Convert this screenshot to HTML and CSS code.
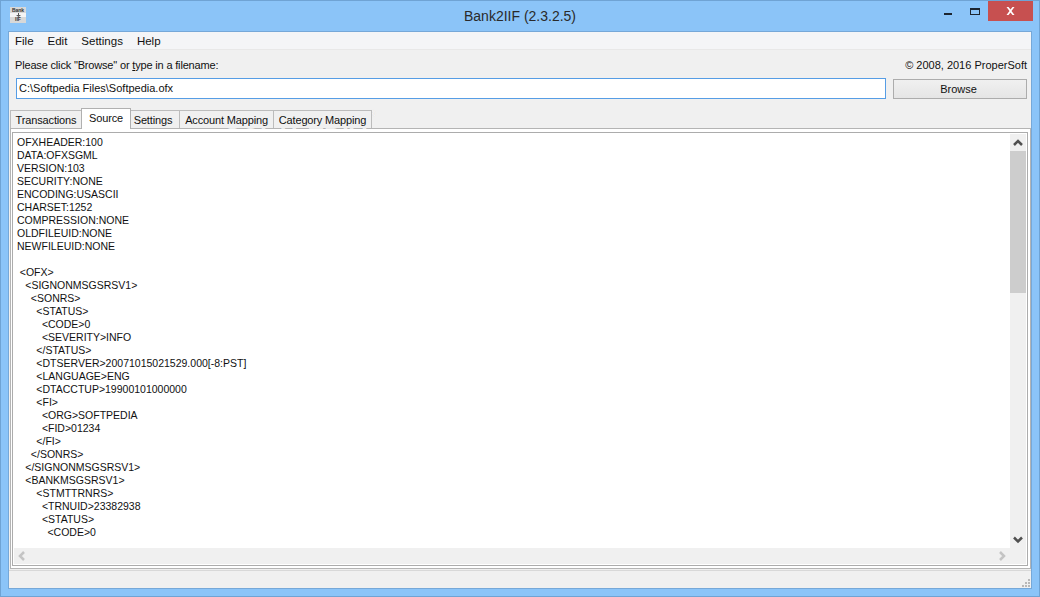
FILE: index.html
```html
<!DOCTYPE html>
<html lang="en">
<head>
<meta charset="utf-8">
<title>Bank2IIF</title>
<link rel="stylesheet" href="styles.css">
</head>
<body>
<div class="window">
  <header class="titlebar">
    <div class="appicon"><span>Bank</span><svg width="5" height="4" viewBox="0 0 5 4"><path d="M2 0h1v2h2L2.500 4 0 2h2z" fill="#555"/></svg><span class="appicon-b">IIF</span></div>
    <div class="title">Bank2IIF (2.3.2.5)</div>
    <div class="controls">
      <svg class="ctl" width="30" height="20" viewBox="0 0 30 20"><rect x="16" y="12" width="8" height="2" fill="#1c2530"/></svg>
      <svg class="ctl" width="30" height="20" viewBox="0 0 30 20"><rect x="12.500" y="7.500" width="9" height="6" fill="none" stroke="#1c2530"/><rect x="12" y="7" width="10" height="2" fill="#1c2530"/></svg>
      <div class="close"><svg width="9" height="8" viewBox="0 0 9 8"><path d="M0.500 0h2l2 2.500 2-2.500h2L5.500 4l3 4h-2l-2-2.500-2 2.500h-2l3-4z" fill="#fff"/></svg></div>
    </div>
  </header>
  <div class="client">
    <nav class="menubar"><span>File</span><span>Edit</span><span>Settings</span><span>Help</span></nav>
    <div class="panel">
      <div class="labels"><span class="prompt">Please click "Browse" or <u>t</u>ype in a filename:</span><span>© 2008, 2016 ProperSoft</span></div>
      <div class="filerow">
        <div class="input">C:\Softpedia Files\Softpedia.ofx</div>
        <div class="button">Browse</div>
      </div>
      <div class="tabs">
        <div class="tab tab-transactions">Transactions</div>
        <div class="tab tab-source active">Source</div>
        <div class="tab tab-settings">Settings</div>
        <div class="tab tab-account">Account Mapping</div>
        <div class="tab tab-category">Category Mapping</div>
      </div>
      <div class="pane">
        <div class="pane-inner">
          <div class="editor">
            <pre class="source">OFXHEADER:100
DATA:OFXSGML
VERSION:103
SECURITY:NONE
ENCODING:USASCII
CHARSET:1252
COMPRESSION:NONE
OLDFILEUID:NONE
NEWFILEUID:NONE

 &lt;OFX&gt;
   &lt;SIGNONMSGSRSV1&gt;
     &lt;SONRS&gt;
       &lt;STATUS&gt;
         &lt;CODE&gt;0
         &lt;SEVERITY&gt;INFO
       &lt;/STATUS&gt;
       &lt;DTSERVER&gt;20071015021529.000[-8:PST]
       &lt;LANGUAGE&gt;ENG
       &lt;DTACCTUP&gt;19900101000000
       &lt;FI&gt;
         &lt;ORG&gt;SOFTPEDIA
         &lt;FID&gt;01234
       &lt;/FI&gt;
     &lt;/SONRS&gt;
   &lt;/SIGNONMSGSRSV1&gt;
   &lt;BANKMSGSRSV1&gt;
       &lt;STMTTRNRS&gt;
         &lt;TRNUID&gt;23382938
         &lt;STATUS&gt;
           &lt;CODE&gt;0</pre>
            <div class="vscroll">
              <svg class="arrow" width="16" height="17" viewBox="0 0 16 17"><path d="M4 11l4-4 4 4" fill="none" stroke="#505050" stroke-width="2.500"/></svg>
              <div class="vtrack"><div class="vthumb"></div></div>
              <svg class="arrow" width="16" height="17" viewBox="0 0 16 17"><path d="M4 6.500l4 4 4-4" fill="none" stroke="#505050" stroke-width="2.500"/></svg>
            </div>
          </div>
          <div class="hscroll">
            <svg width="16" height="16" viewBox="0 0 16 16"><path d="M10 4l-4 4 4 4" fill="none" stroke="#c4c4c4" stroke-width="2.500"/></svg>
            <svg width="16" height="16" viewBox="0 0 16 16"><path d="M6 4l4 4-4 4" fill="none" stroke="#c4c4c4" stroke-width="2.500"/></svg>
          </div>
        </div>
      </div>
    </div>
    <footer class="statusbar">
      <svg class="grip" width="8" height="8" viewBox="0 0 8 8"><g fill="#b8b8b8"><rect x="6" y="0" width="2" height="2"/><rect x="3" y="3" width="2" height="2"/><rect x="6" y="3" width="2" height="2"/><rect x="0" y="6" width="2" height="2"/><rect x="3" y="6" width="2" height="2"/><rect x="6" y="6" width="2" height="2"/></g></svg>
    </footer>
  </div>
</div>
<div class="watermark">SOFTPEDIA<sup class="reg">®</sup></div>
</body>
</html>
```
FILE: styles.css
```css
* { box-sizing: border-box; }
html, body { margin: 0; padding: 0; }
body {
  width: 1040px;
  height: 597px;
  overflow: hidden;
  position: relative;
  font-family: "Liberation Sans", Arial, sans-serif;
  font-size: 11px;
  color: #111;
}
.window {
  width: 1040px;
  height: 597px;
  background: #8bc4f8;
  border: 1px solid #6fa3d4;
  display: flex;
  flex-direction: column;
  padding: 0 7px 7px;
}
.titlebar {
  height: 30px;
  display: flex;
  align-items: flex-start;
  position: relative;
  flex: none;
}
.appicon {
  width: 16px;
  height: 16px;
  margin-top: 6px;
  margin-left: 2px;
  background: linear-gradient(#d8d8d8 0 6px, #f4f4f4 6px 10px, #d8d8d8 10px);
  display: flex;
  flex-direction: column;
  align-items: center;
  font-size: 5px;
  line-height: 6px;
  font-weight: 700;
  color: #333;
  flex: none;
}
.appicon-b { line-height: 5px; }
.title {
  position: absolute;
  left: 0;
  right: 0;
  top: 7px;
  text-align: center;
  font-size: 14px;
  line-height: 17px;
  color: #2a2a2a;
}
.controls {
  margin-left: auto;
  display: flex;
  margin-right: -1px;
  position: relative;
}
.ctl { display: block; }
.close {
  width: 45px;
  height: 20px;
  background: #c75050;
  display: flex;
  align-items: center;
  justify-content: center;
}
.client {
  flex: 1;
  display: flex;
  flex-direction: column;
  border: 1px solid #76a8d8;
  background: #f0f0f0;
  min-height: 0;
}
.menubar {
  height: 18px;
  flex: none;
  background: #f4f5f7;
  border-bottom: 1px solid #e8e8e8;
  display: flex;
  gap: 14px;
  padding-left: 6px;
  font-size: 11.500px;
  line-height: 18px;
}
.panel {
  flex: 1;
  min-height: 0;
  display: flex;
  flex-direction: column;
  padding: 0 0 1px 1px;
}
.labels {
  display: flex;
  justify-content: space-between;
  padding: 9px 4px 0 5px;
  height: 28px;
  line-height: 13px;
  flex: none;
}
.prompt { letter-spacing: -0.170px; }
.filerow {
  display: flex;
  gap: 7px;
  padding: 0 4px 0 6px;
  height: 21px;
  flex: none;
}
.input {
  flex: 1;
  border: 1px solid #569de5;
  background: #fff;
  line-height: 19px;
  padding-left: 2px;
}
.button {
  width: 134px;
  height: 20px;
  margin-top: 1px;
  border: 1px solid #acacac;
  background: linear-gradient(#f0f0f0, #e5e5e5);
  text-align: center;
  line-height: 18px;
  padding-right: 3px;
}
.tabs {
  display: flex;
  align-items: flex-end;
  height: 30px;
  flex: none;
  margin-bottom: -1px;
  position: relative;
  z-index: 1;
}
.tab {
  height: 18px;
  margin-bottom: 1px;
  background: #f0f0f0;
  border: 1px solid #bcbcbc;
  border-bottom: 0;
  line-height: 19px;
  text-align: center;
  letter-spacing: -0.150px;
  margin-left: -1px;
}
.tab:first-child { margin-left: 0; }
.tab-transactions { width: 72px; }
.tab-source { width: 50px; }
.tab-settings { width: 50px; padding-right: 4px; }
.tab-account { width: 95px; }
.tab-category { width: 99px; }
.tab.active {
  height: 21px;
  margin-bottom: 0;
  background: #fff;
  border-color: #b0b0b0;
  position: relative;
  z-index: 1;
}
.pane {
  flex: 1;
  min-height: 0;
  border: 1px solid #b4b4b4;
  background: #fff;
  padding: 3px 2px 2px 1px;
}
.pane-inner {
  height: 100%;
  border: 1px solid #acacac;
  padding: 1px;
  display: flex;
  flex-direction: column;
}
.editor {
  flex: 1;
  min-height: 0;
  display: flex;
}
.source {
  flex: 1;
  margin: 0;
  padding: 2px 3px 0;
  font-family: inherit;
  font-size: 10.500px;
  line-height: 13px;
  word-spacing: -0.150px;
  overflow: hidden;
  background: #fff;
}
.vscroll {
  width: 16px;
  flex: none;
  background: #f0f0f0;
  display: flex;
  flex-direction: column;
}
.arrow { display: block; flex: none; }
.vtrack { flex: 1; }
.vthumb { height: 142px; background: #cdcdcd; }
.hscroll {
  height: 16px;
  flex: none;
  background: #f0f0f0;
  display: flex;
  justify-content: space-between;
  padding-right: 16px;
}
.statusbar {
  height: 18px;
  flex: none;
  border-top: 1px solid #d8d8d8;
  display: flex;
  align-items: flex-end;
  justify-content: flex-end;
  padding: 0 1px 1px 0;
}
.grip { display: block; }
.watermark {
  position: absolute;
  left: 224px;
  top: 106px;
  font-size: 25px;
  line-height: 28px;
  font-weight: 700;
  color: rgba(255, 255, 255, 0.8);
  text-shadow: 0 0 1px rgba(0, 0, 0, 0.1);
  pointer-events: none;
}
.reg { font-size: 9px; line-height: 0; vertical-align: 12px; margin-left: 2px; }
```
